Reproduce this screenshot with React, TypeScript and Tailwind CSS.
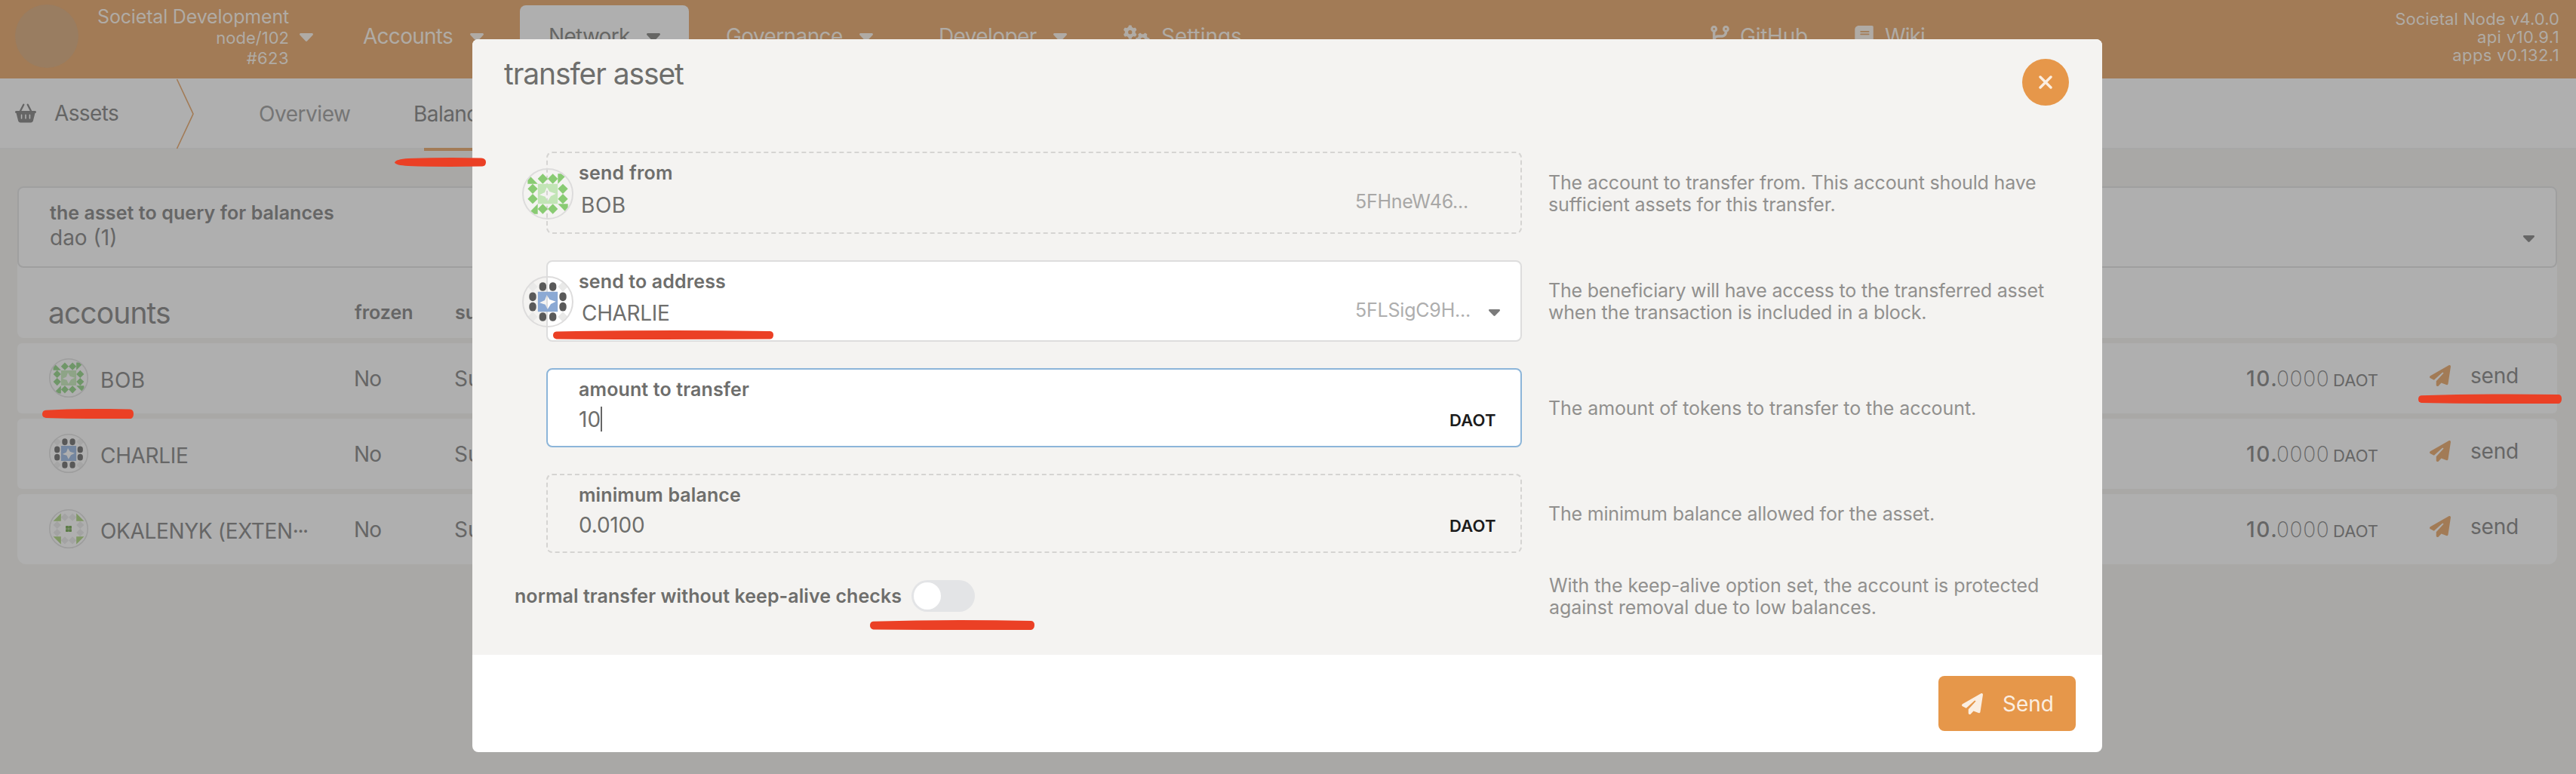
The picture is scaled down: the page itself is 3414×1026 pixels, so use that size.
import type { ReactNode } from "react";
import { FaBasketShopping, FaBook, FaCodeBranch, FaGears, FaPaperPlane } from "react-icons/fa6";

function Caret({ className }: { className: string }) {
  return (
    <svg viewBox="0 0 18 11" preserveAspectRatio="none" className={className} fill="currentColor">
      <path d="M1.6 0h14.8c1.4 0 2.1 1.5 1.1 2.6L10.2 10.3c-.7.8-1.7.8-2.4 0L.5 2.6C-.5 1.5.2 0 1.6 0z" />
    </svg>
  );
}

type Palette = { cell: string; corner: string; center: string; ring: string };
type Kind = "bob" | "charlie" | "okalenyk";

/* 4x4 identicon: eight edge cells, four corner cells and a central mark */
function Identicon({ kind, palette, className }: { kind: Kind; palette: Palette; className: string }) {
  const edges = [
    [1, 0], [2, 0], [0, 1], [3, 1], [0, 2], [3, 2], [1, 3], [2, 3],
  ];
  const corners = [
    [0, 0], [3, 0], [0, 3], [3, 3],
  ];
  const bobCorners = "M0 0L40 40H0ZM120 0H160L120 40ZM0 160L40 120V160ZM120 120H160V160Z";
  const okalenykCorners = "M0 40L40 0V40ZM120 0V40H160ZM0 120H40V160ZM120 120H160L120 160Z";
  return (
    <svg viewBox="-22 -22 204 204" className={className}>
      <clipPath id={`ring-${kind}`}>
        <circle cx="80" cy="80" r="97" />
      </clipPath>
      <g clipPath={`url(#ring-${kind})`}>
        {edges.map(([x, y]) =>
          kind === "charlie" ? (
            <rect key={`${x}${y}`} x={x * 40 + 6} y={y * 40 + 2.5} width="28" height="35" rx="14" fill={palette.cell} />
          ) : (
            <path key={`${x}${y}`} d="M20 0L40 20L20 40L0 20Z" transform={`translate(${x * 40} ${y * 40})`} fill={palette.cell} />
          ),
        )}
        {kind === "charlie" &&
          corners.map(([x, y]) => (
            <path key={`${x}${y}`} d="M20 0L40 20L20 40L0 20Z" transform={`translate(${x * 40} ${y * 40})`} fill={palette.corner} />
          ))}
        {kind === "bob" && <path d={bobCorners} fill={palette.corner} />}
        {kind === "okalenyk" && <path d={okalenykCorners} fill={palette.corner} />}
        {kind === "okalenyk" ? (
          <path d="M67 67h10v10h-10zM83 67h10v10h-10zM67 83h10v10h-10zM83 83h10v10h-10z" stroke={palette.center} strokeWidth="5" strokeLinejoin="round" fill={palette.center} />
        ) : (
          <path fillRule="evenodd" d="M40.5 40.5H119.5V119.5H40.5ZM76 53L87 71L112 79L92 89L79 110L70 91L47 84L68 74Z" fill={palette.center} />
        )}
      </g>
      <circle cx="80" cy="80" r="99" fill="none" stroke={palette.ring} strokeWidth="6" />
    </svg>
  );
}

const bobBright = { cell: "#89cb73", corner: "#89cb73", center: "#c2e5b6", ring: "#dddcdc" };
const charlieBright = { cell: "#5a5a5a", corner: "#e9e9e8", center: "#8ba9d4", ring: "#dddcdc" };

const accounts: { name: string; nameClass: string; kind: Kind; palette: Palette }[] = [
  { name: "BOB", nameClass: "tracking-[0.02em]", kind: "bob", palette: { cell: "#6f9668", corner: "#6f9668", center: "#8ea487", ring: "#9d9d9d" } },
  { name: "CHARLIE", nameClass: "tracking-[-0.0116em]", kind: "charlie", palette: { cell: "#585858", corner: "#a6a6a6", center: "#74869f", ring: "#9d9d9d" } },
  { name: "OKALENYK (EXTEN", nameClass: "tracking-[-0.0126em]", kind: "okalenyk", palette: { cell: "#a3a3a3", corner: "#7f9764", center: "#5c7c48", ring: "#9d9d9d" } },
];

function Header() {
  return (
    <header className="flex h-[104px] bg-[#a27b56] text-[28px] leading-[34px] text-[#b0aba5]">
      <div className="mt-1.5 ml-5 size-[84px] rounded-full bg-[#997d61]" />
      <div className="flex w-[279px] flex-col items-end pt-[7px]">
        <div className="text-[25px] leading-[30px] tracking-[-0.007em]">Societal Development</div>
        <div className="text-[22px] leading-[27px]">node/102</div>
        <div className="text-[22px] leading-[27px] tracking-[0.02em]">#623</div>
      </div>
      <Caret className="mt-11 ml-3.5 h-[11px] w-[18px]" />
      <div className="ml-[66px] flex w-[208px] pt-[31px]">
        <div className="w-[142px] tracking-[-0.0259em]">Accounts</div>
        <Caret className="mt-[13px] h-[11px] w-[18px]" />
      </div>
      <div className="mt-[7px] flex w-[224px] rounded-t-lg bg-[#afafaf] pt-6 pl-[38px] text-[#666664]">
        <div className="w-[130px] tracking-[-0.0248em]">Network</div>
        <Caret className="mt-[13px] h-[11px] w-[18px]" />
      </div>
      <div className="flex w-[331px] pt-[31px] pl-[49px]">
        <div className="w-[177px] tracking-[-0.0215em]">Governance</div>
        <Caret className="mt-[13px] h-[11px] w-[18px]" />
      </div>
      <div className="flex w-[245px] pt-[31px]">
        <div className="w-[152px] tracking-[-0.0215em]">Developer</div>
        <Caret className="mt-[13px] h-[11px] w-[18px]" />
      </div>
      <div className="flex w-[778px] pt-[31px]">
        <FaGears className="mt-0.5 h-[28px] w-[35px]" />
        <div className="ml-[15px] tracking-[-0.0022em]">Settings</div>
      </div>
      <div className="flex w-[191px] pt-[31px]">
        <FaCodeBranch className="mt-[3px] h-[28px] w-[25px]" />
        <div className="ml-[14px] tracking-[-0.0086em]">GitHub</div>
      </div>
      <div className="flex pt-[31px]">
        <FaBook className="mt-[3px] h-[28px] w-[25px]" />
        <div className="ml-[15px] tracking-[-0.0326em]">Wiki</div>
      </div>
      <div className="mr-[22px] ml-auto flex flex-col items-end pt-[13px] text-[22px] leading-6">
        <div className="tracking-[0.004em]">Societal Node v4.0.0</div>
        <div className="tracking-[0.018em]">api v10.9.1</div>
        <div className="tracking-[0.018em]">apps v0.132.1</div>
      </div>
    </header>
  );
}

function SubNav() {
  return (
    <nav className="flex h-[94px] border-b-2 border-[#a7a7a7] bg-[#afafaf] text-[28px] leading-[34px] text-[#656565]">
      <FaBasketShopping className="mt-[32px] ml-5 h-[28px] w-[28px]" />
      <div className="mt-[29px] ml-6 w-[162px] tracking-[-0.0221em]">Assets</div>
      <svg viewBox="0 0 24 92" className="h-[92px] w-6 overflow-visible" fill="none" stroke="#a27b56" strokeWidth="1.6">
        <path d="M.5 1L22 47L.5 93" />
      </svg>
      <div className="mt-[30px] ml-[85px] w-[205px] tracking-[-0.0165em] text-[#757575]">Overview</div>
      <div className="h-[96px] pt-[30px] tracking-[-0.02em]">
        <div>Balances</div>
        <div className="mt-7 ml-[14px] h-1 w-[120px] bg-[#a27b56]" />
      </div>
    </nav>
  );
}

function BalancesTable() {
  return (
    <main className="mt-[49px] mr-[25px] ml-[23px] text-[28px] leading-[34px] text-[#666666]">
      <div className="rounded-lg bg-[#afafaf]">
        <div className="flex h-[108px] rounded-lg border-2 border-[#9f9f9f]">
          <div className="pt-[18px] pl-[41px]">
            <div className="text-[25px] leading-[31px] font-semibold tracking-[0.0034em]">the asset to query for balances</div>
            <div>dao (1)</div>
          </div>
          <Caret className="mt-[63px] mr-7 ml-auto h-[9px] w-[15px]" />
        </div>
        <div className="mb-[7px] flex h-[93px] text-[25px] leading-[30px] font-semibold">
          <div className="w-[447px] pt-9 pl-[41px] text-[39px] leading-[48px] font-normal tracking-[-0.0232em]">accounts</div>
          <div className="w-[133px] pt-11">frozen</div>
          <div className="pt-11">sufficient</div>
        </div>
      </div>
      <div className="flex flex-col gap-[7px]">
        {accounts.map((a) => (
          <div key={a.name} className="flex h-[93px] rounded-md bg-[#afafaf] last:rounded-b-xl">
            <Identicon kind={a.kind} palette={a.palette} className="mt-5 ml-[42px] size-[52px]" />
            <div className="mt-8 ml-4 flex w-[336px] whitespace-nowrap">
              <span className={a.nameClass}>{a.name}</span>
              {a.kind === "okalenyk" && <span className="tracking-[-0.05em]">···</span>}
            </div>
            <div className="w-[133px] pt-[30px] tracking-[-0.03em]">No</div>
            <div className="pt-[30px]">Sufficient</div>
            <div className="ml-auto flex w-[243px] items-baseline pt-[30px]">
              <span className="w-[40px] font-medium tracking-[0.06em]">10.</span>
              <span className="w-[75px] font-extralight tracking-[0.025em]">0000</span>
              <span className="text-[22px] tracking-[0.002em]">DAOT</span>
            </div>
            <FaPaperPlane className="mt-[29px] size-[28px] text-[#a27b56]" />
            <div className="w-[141px] pt-[26px] pl-[26px] tracking-[-0.0077em]">send</div>
          </div>
        ))}
      </div>
    </main>
  );
}

function Field({ boxClass, avatar, label, value, right, help, helpClass }: {
  boxClass: string; avatar?: ReactNode; label: ReactNode; value: ReactNode; right: ReactNode; help: ReactNode; helpClass: string;
}) {
  return (
    <div className="mb-[35px] ml-[98px] flex">
      <div className={`relative flex w-[1293px] justify-between rounded-lg border-2 pl-[41px] ${boxClass}`}>
        {avatar}
        <div className="pt-[11px]">
          <div className="text-[25px] leading-[30px] font-semibold">{label}</div>
          {value}
        </div>
        {right}
      </div>
      <div className={`ml-[35px] text-[25px] leading-[29px] whitespace-nowrap text-[#91908e] ${helpClass}`}>{help}</div>
    </div>
  );
}

function Unit() {
  return <div className="w-[94px] pt-[55px] text-[22px] leading-6 font-semibold tracking-[0.0095em] text-[#1c1c1c]">DAOT</div>;
}

function TransferModal() {
  return (
    <section className="absolute top-[52px] left-[626px] h-[945px] w-[2160px] overflow-hidden rounded-lg bg-white text-[28px] leading-[34px] text-[#6e6e6c]">
      <div className="h-[816px] bg-[#f4f3f1]">
        <div className="flex h-[149px] justify-between pt-[22px] pr-[44px] pl-[42px]">
          <h1 className="text-[39px] leading-[48px] tracking-[-0.0285em]">transfer asset</h1>
          <button className="mt-1 flex size-[62px] items-center justify-center rounded-full bg-[#e6974a]">
            <svg viewBox="0 0 18 18" className="size-[18px]" stroke="#fbeee1" strokeWidth="3.4" strokeLinecap="round">
              <path d="M2 2L16 16M16 2L2 16" />
            </svg>
          </button>
        </div>
        <Field
          boxClass="h-[109px] border-dashed border-[#d5d4d2]"
          avatar={<Identicon kind="bob" palette={bobBright} className="absolute top-5 -left-[34px] size-[68px]" />}
          label={<span className="tracking-[0.0099em]">send from</span>}
          value={<div className="mt-[11px] ml-[3px] tracking-[0.02em]">BOB</div>}
          right={<div className="w-[219px] pt-[49px] text-[25px] leading-[30px] tracking-[-0.0105em] text-[#a8a7a6]">5FHneW46...</div>}
          help={
            <div className="tracking-[-0.0068em]">
              <p>The account to transfer from. This account should have</p>
              <p>sufficient assets for this transfer.</p>
            </div>
          }
          helpClass="pt-[27px]"
        />
        <Field
          boxClass="h-[108px] border-[#dddddd] bg-white"
          avatar={<Identicon kind="charlie" palette={charlieBright} className="absolute top-[19px] -left-[34px] size-[68px]" />}
          label={<span className="tracking-[0.005em]">send to address</span>}
          value={<div className="mt-[10px] ml-1 tracking-[-0.0116em]">CHARLIE</div>}
          right={
            <div className="flex w-[219px] pt-[49px] text-[25px] leading-[30px] text-[#aeaeae]">
              <div className="w-[177px] tracking-[-0.0082em]">5FLSigC9H...</div>
              <Caret className="mt-[14px] h-[9px] w-[15px] text-[#7b7b7b]" />
            </div>
          }
          help={
            <div className="tracking-[-0.008em]">
              <p>The beneficiary will have access to the transferred asset</p>
              <p>when the transaction is included in a block.</p>
            </div>
          }
          helpClass="pt-[26px]"
        />
        <Field
          boxClass="h-[105px] border-[#8cb5d9] bg-white"
          label={<span className="tracking-[0.0054em]">amount to transfer</span>}
          value={
            <div className="mt-2 flex">
              <span className="w-[29px]">10</span>
              <span className="h-[33px] w-0.5 bg-[#666666]" />
            </div>
          }
          right={<Unit />}
          help={<p className="tracking-[-0.0035em]">The amount of tokens to transfer to the account.</p>}
          helpClass="pt-[39px]"
        />
        <div className="-mb-[35px]">
          <Field
            boxClass="h-[105px] border-dashed border-[#d5d4d2]"
            label={<span className="tracking-[0.0044em]">minimum balance</span>}
            value={<div className="mt-2 tracking-[-0.0073em]">0.0100</div>}
            right={<Unit />}
            help={<p className="tracking-[-0.0075em]">The minimum balance allowed for the asset.</p>}
            helpClass="pt-[39px]"
          />
        </div>
        <div className="flex pl-[56px] text-[25px] whitespace-nowrap">
          <div className="w-[526px] pt-[42px] leading-[30px] font-semibold tracking-[0.0028em]">normal transfer without keep-alive checks</div>
          <div className="mt-9 h-[42px] w-[84px] rounded-full bg-[#e3e4e6] p-[3px]">
            <div className="size-9 rounded-full bg-white" />
          </div>
          <div className="ml-[761px] pt-[29px] leading-[29px] tracking-[-0.0036em] text-[#91908e]">
            <p>With the keep-alive option set, the account is protected</p>
            <p>against removal due to low balances.</p>
          </div>
        </div>
      </div>
      <div className="flex justify-end pt-7 pr-[35px]">
        <button className="flex h-[73px] w-[182px] items-center rounded-lg bg-[#e6974a] pl-[31px] text-[#fbeee1]">
          <FaPaperPlane className="size-[28px]" />
          <span className="ml-[26px]">Send</span>
        </button>
      </div>
    </section>
  );
}

/* Hand-drawn red underlines lying over the page */
function Marker({ className, d = "M4 1.5Q50 -1 96 .5Q100 1 100 6Q100 11 97 12Q50 12.5 4 11Q0 10.5 0 6.5Q0 2 4 1.5Z" }: { className: string; d?: string }) {
  return (
    <svg viewBox="0 0 100 12" preserveAspectRatio="none" className={`absolute fill-[#eb4025] ${className}`}>
      <path d={d} />
    </svg>
  );
}

export default function App() {
  return (
    <div className="relative h-[1026px] w-[3414px] overflow-hidden bg-[#a9a8a6] font-['Inter',sans-serif]">
      <Header />
      <SubNav />
      <BalancesTable />
      <TransferModal />
      <Marker className="top-[209px] left-[523px] h-[12px] w-[121px]" d="M0 6.5Q1 2 15 1Q55 -.5 95 .5Q100 1 100 6Q100 11 96 11.5Q50 12.5 15 11Q1 10 0 6.5Z" />
      <Marker className="top-[542px] left-[56px] h-[13px] w-[121px]" />
      <Marker className="top-[438px] left-[733px] h-[12px] w-[292px]" d="M1.5 1.5Q50 -1 98.5 1Q100 1.5 100 6Q100 11 98.5 11.5Q50 12.5 1.5 11.5Q0 10.5 0 6.5Q0 2 1.5 1.5Z" />
      <Marker className="top-[822px] left-[1153px] h-[13px] w-[218px]" d="M2 1.5Q50 -1 98 1Q100 1.5 100 6Q100 11 98 12Q50 12.5 2 11.5Q0 10.5 0 6.5Q0 2 2 1.5Z" />
      <Marker className="top-[522px] left-[3205px] h-[13px] w-[190px]" d="M2 2Q50 -.5 98 1Q100 1.5 100 6Q100 11 98 12Q50 12.5 2 11Q0 10.5 0 6.5Q0 2.5 2 2Z" />
    </div>
  );
}
